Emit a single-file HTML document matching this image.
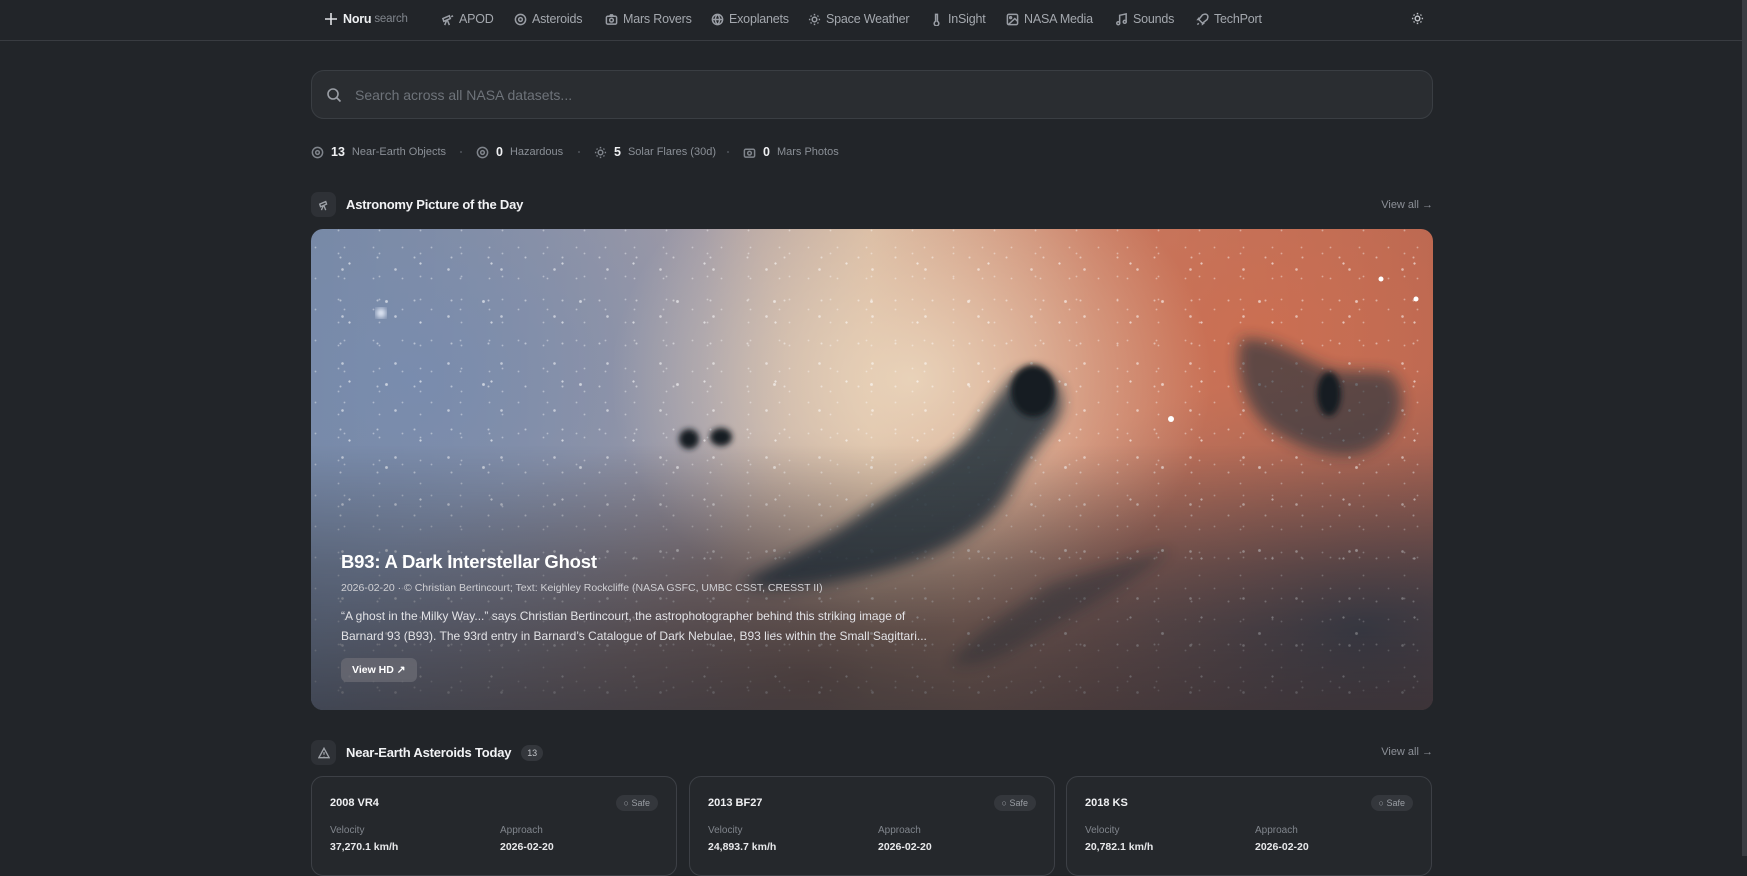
<!DOCTYPE html>
<html><head><meta charset="utf-8"><style>
*{box-sizing:border-box;margin:0;padding:0}
body{width:1747px;height:856px;overflow:hidden;background:#222529;font-family:"Liberation Sans",sans-serif;color:#e6e8eb;position:relative}
.nav{position:absolute;left:0;top:0;width:1747px;height:41px;border-bottom:1px solid #393c41}
.ni{position:absolute;top:12px;font-size:12.5px;color:#a4a8ae;display:flex;align-items:center;gap:5px;white-space:nowrap;letter-spacing:-0.2px}
.ni svg{width:13px;height:13px;stroke:#9a9ea5;fill:none;stroke-width:1.6}
.search{position:absolute;left:311px;top:70px;width:1122px;height:49px;border:1px solid #3a3e43;border-radius:13px;background:#2a2d31}
.search span{position:absolute;left:43px;top:16px;font-size:14px;color:#6e737a}
.stats{position:absolute;top:145px;left:311px;font-size:11px;color:#8a8f96}
.st{position:absolute;top:0;display:flex;align-items:center;gap:7px;white-space:nowrap}
.st b{color:#f0f1f3;font-size:12.5px}
.st svg{width:13px;height:13px;stroke:#80858c;fill:none;stroke-width:1.6}
.dot{position:absolute;top:6px;width:2px;height:2px;border-radius:50%;background:#50545a}
.hdr{position:absolute;left:311px;display:flex;align-items:center;gap:10px;font-size:13px;font-weight:bold;color:#f2f3f5;letter-spacing:-0.2px}
.ib{width:25px;height:25px;border-radius:7px;background:#2e3136;display:flex;align-items:center;justify-content:center}
.ib svg{width:12px;height:12px;stroke:#9ea2a8;fill:none;stroke-width:1.6}
.va{position:absolute;right:314px;font-size:11px;color:#8c9097}
.img{position:absolute;left:311px;top:229px;width:1122px;height:481px;border-radius:12px;overflow:hidden;
background:
radial-gradient(ellipse 300px 250px at 600px 150px,rgba(235,215,190,.9),transparent),
radial-gradient(ellipse 420px 300px at 950px 100px,rgba(205,110,80,.85),transparent),
radial-gradient(ellipse 380px 330px at 100px 150px,rgba(120,140,175,.9),transparent),
radial-gradient(ellipse 400px 260px at 1050px 400px,rgba(60,70,85,.9),transparent),
radial-gradient(ellipse 500px 250px at 500px 450px,rgba(110,80,70,.8),transparent),
linear-gradient(90deg,#7787a0 0%,#a59ca5 35%,#d4b39a 50%,#c5806a 70%,#b26552 100%)}
.stars{position:absolute;inset:0;background:
radial-gradient(circle,rgba(255,255,255,.9) 0.8px,transparent 1.4px) 3px 5px/71px 59px,
radial-gradient(circle,rgba(255,255,255,.7) 0.7px,transparent 1.3px) 11px 7px/37px 43px,
radial-gradient(circle,rgba(255,255,255,.8) 1px,transparent 1.6px) 5px 17px/53px 47px,
radial-gradient(circle,rgba(255,255,255,.6) 0.6px,transparent 1.2px) 19px 3px/29px 31px,
radial-gradient(circle,rgba(255,255,255,.6) 0.6px,transparent 1.2px) 7px 13px/41px 23px,
radial-gradient(circle,rgba(255,255,255,.9) 1.1px,transparent 1.8px) 27px 31px/97px 83px;opacity:.65}
.shade{position:absolute;inset:0;background:linear-gradient(180deg,transparent 45%,rgba(35,35,42,.35) 70%,rgba(35,35,42,.65) 100%)}
.cap{position:absolute;left:30px;top:322px;width:600px}
.cap h2{font-size:18.5px;color:#fff;font-weight:bold;margin-bottom:9px;letter-spacing:-0.2px}
.cap .m{font-size:10.5px;color:#d0d0d4;margin-bottom:12px;white-space:nowrap}
.cap p{font-size:12px;line-height:20px;color:#e2e2e6}
.btn{display:inline-block;margin-top:12px;padding:6px 11px;border-radius:6px;background:rgba(110,110,118,.7);font-size:10.5px;font-weight:bold;color:#fff}
.card{position:absolute;top:776px;width:366px;height:100px;border:1px solid #3d4046;border-radius:12px;background:#25282c}
.card .n{position:absolute;left:18px;top:20px;font-size:11px;font-weight:bold;color:#f0f1f3}
.card .safe{position:absolute;right:18px;top:18px;font-size:9px;color:#9a9ea4;background:#34373c;border-radius:9px;padding:3px 8px}
.card .l{position:absolute;top:48px;font-size:10px;color:#80858c}
.card .v{position:absolute;top:64px;font-size:10.5px;color:#e8e9eb;font-weight:bold}
.sb{position:absolute;right:0;top:0;width:5px;height:856px;background:#3a3d42}
</style></head><body>
<div class="nav">
<div class="ni" style="left:324px;color:#fff"><svg viewBox="0 0 14 14" style="stroke:#e0e2e5;width:14px;height:14px"><path d="M7 1v12M1 7h12"/></svg><b style="color:#eef0f2">Noru</b><span style="color:#80858c;margin-left:-2px;font-size:11.5px">search</span></div>
<div class="ni" style="left:441px"><svg viewBox="0 0 14 14"><path d="M2 6l7-3 1 3-7 3zM6 8l-2 5M7 8l2 5M11 4l2-1"/></svg>APOD</div>
<div class="ni" style="left:514px"><svg viewBox="0 0 14 14"><circle cx="7" cy="7" r="5.5"/><circle cx="7" cy="7" r="2"/></svg>Asteroids</div>
<div class="ni" style="left:605px"><svg viewBox="0 0 14 14"><rect x="1.5" y="3.5" width="11" height="8.5" rx="1.5"/><circle cx="7" cy="7.7" r="2"/><path d="M5 3.5l1-1.5h2l1 1.5"/></svg>Mars Rovers</div>
<div class="ni" style="left:711px"><svg viewBox="0 0 14 14"><circle cx="7" cy="7" r="5.5"/><path d="M1.5 7h11M7 1.5c-3 3-3 8 0 11M7 1.5c3 3 3 8 0 11"/></svg>Exoplanets</div>
<div class="ni" style="left:808px"><svg viewBox="0 0 14 14"><circle cx="7" cy="7" r="2.5"/><path d="M7 1v1.5M7 11.5V13M1 7h1.5M11.5 7H13M2.8 2.8l1 1M10.2 10.2l1 1M2.8 11.2l1-1M10.2 3.8l1-1"/></svg>Space Weather</div>
<div class="ni" style="left:930px"><svg viewBox="0 0 14 14"><path d="M6 1.5h2v7.5a2.5 2.5 0 1 1-2 0z"/></svg>InSight</div>
<div class="ni" style="left:1006px"><svg viewBox="0 0 14 14"><rect x="1.5" y="1.5" width="11" height="11" rx="1.5"/><circle cx="5" cy="5" r="1"/><path d="M12.5 9l-3-3-7 6.5"/></svg>NASA Media</div>
<div class="ni" style="left:1115px"><svg viewBox="0 0 14 14"><path d="M5 11V2.5l7-1.5V9.5"/><circle cx="3.5" cy="11" r="1.6"/><circle cx="10.5" cy="9.5" r="1.6"/></svg>Sounds</div>
<div class="ni" style="left:1196px"><svg viewBox="0 0 14 14"><path d="M5 9l-2-2 4-5c2-1 4-1 5 0 1 1 1 3 0 5l-5 4zM3 11l-1.5 1.5M4 7H2l1.5-2M7 10v2l2-1.5"/></svg>TechPort</div>
<div class="ni" style="left:1411px"><svg viewBox="0 0 14 14" style="stroke:#c0c3c8"><circle cx="7" cy="7" r="2.5"/><path d="M7 1v1.5M7 11.5V13M1 7h1.5M11.5 7H13M2.8 2.8l1 1M10.2 10.2l1 1M2.8 11.2l1-1M10.2 3.8l1-1"/></svg></div>
</div>
<div class="search"><svg style="position:absolute;left:14px;top:16px" width="16" height="16" viewBox="0 0 16 16" fill="none" stroke="#9a9ea5" stroke-width="1.6"><circle cx="7" cy="7" r="5"/><path d="M11 11l3.5 3.5"/></svg><span>Search across all NASA datasets...</span></div>
<div class="stats">
<div class="st" style="left:0"><svg viewBox="0 0 14 14"><circle cx="7" cy="7" r="5.5"/><circle cx="7" cy="7" r="2"/></svg><b>13</b>Near-Earth Objects</div>
<div class="dot" style="left:149px"></div>
<div class="st" style="left:165px"><svg viewBox="0 0 14 14"><circle cx="7" cy="7" r="5.5"/><circle cx="7" cy="7" r="2"/></svg><b>0</b>Hazardous</div>
<div class="dot" style="left:267px"></div>
<div class="st" style="left:283px"><svg viewBox="0 0 14 14"><circle cx="7" cy="7" r="2.5"/><path d="M7 1v1.5M7 11.5V13M1 7h1.5M11.5 7H13M2.8 2.8l1 1M10.2 10.2l1 1M2.8 11.2l1-1M10.2 3.8l1-1"/></svg><b>5</b>Solar Flares (30d)</div>
<div class="dot" style="left:416px"></div>
<div class="st" style="left:432px"><svg viewBox="0 0 14 14"><rect x="1.5" y="3.5" width="11" height="8.5" rx="1.5"/><circle cx="7" cy="7.7" r="2"/></svg><b>0</b>Mars Photos</div>
</div>
<div class="hdr" style="top:192px"><div class="ib"><svg viewBox="0 0 14 14"><path d="M2 6l7-3 1 3-7 3zM6 8l-2 5M7 8l2 5"/></svg></div>Astronomy Picture of the Day</div>
<div class="va" style="top:199px">View all →</div>
<div class="img">
<div class="stars"></div>
<svg style="position:absolute;inset:0" width="1122" height="481"><defs><filter id="b" x="-20%" y="-20%" width="140%" height="140%"><feGaussianBlur stdDeviation="7"/></filter><filter id="b2"><feGaussianBlur stdDeviation="3"/></filter></defs>
<g filter="url(#b)" fill="#22303c" opacity=".85">
<path d="M700 150c25-20 55 0 50 30-5 20-30 40-50 80-25 45-80 70-140 85-50 12-100 20-130 10 30-20 80-40 120-70 50-35 100-60 120-95z"/>
<path d="M860 320c-30 30-90 60-140 90-30 20-60 30-80 25 20-30 60-50 100-80z" opacity=".5"/>
<path d="M930 110c30-5 60 20 90 30 20 5 40 0 60 5 20 20 10 60-20 75-30 15-70 0-100-20-20-15-40-50-30-90z" opacity=".75"/>
</g>
<g filter="url(#b2)" fill="#151c24">
<ellipse cx="722" cy="162" rx="22" ry="26"/>
<ellipse cx="410" cy="208" rx="11" ry="9"/><ellipse cx="378" cy="210" rx="10" ry="10"/>
<ellipse cx="1018" cy="165" rx="12" ry="22"/>
</g>
<circle cx="70" cy="84" r="5" fill="#eef4ff" filter="url(#b2)"/>
<circle cx="860" cy="190" r="3" fill="#fff"/><circle cx="1070" cy="50" r="2.5" fill="#fff"/><circle cx="1105" cy="70" r="2.5" fill="#fff"/>
</svg>
<div class="shade"></div>
<div class="cap"><h2>B93: A Dark Interstellar Ghost</h2>
<div class="m">2026-02-20 · © Christian Bertincourt; Text: Keighley Rockcliffe (NASA GSFC, UMBC CSST, CRESST II)</div>
<p>“A ghost in the Milky Way...” says Christian Bertincourt, the astrophotographer behind this striking image of Barnard 93 (B93). The 93rd entry in Barnard’s Catalogue of Dark Nebulae, B93 lies within the Small Sagittari...</p>
<div class="btn">View HD ↗</div></div>
</div>
<div class="hdr" style="top:740px"><div class="ib"><svg viewBox="0 0 14 14"><path d="M7 1.5l6 11H1zM7 6v3M7 10.5v.5"/></svg></div>Near-Earth Asteroids Today<span style="font-size:9px;background:#34373c;border-radius:8px;padding:3px 6px;color:#c0c3c7;font-weight:normal">13</span></div>
<div class="va" style="top:746px">View all →</div>
<div class="card" style="left:311px"><div class="n">2008 VR4</div><div class="safe">○ Safe</div><div class="l" style="left:18px">Velocity</div><div class="l" style="left:188px">Approach</div><div class="v" style="left:18px">37,270.1 km/h</div><div class="v" style="left:188px">2026-02-20</div></div>
<div class="card" style="left:689px"><div class="n">2013 BF27</div><div class="safe">○ Safe</div><div class="l" style="left:18px">Velocity</div><div class="l" style="left:188px">Approach</div><div class="v" style="left:18px">24,893.7 km/h</div><div class="v" style="left:188px">2026-02-20</div></div>
<div class="card" style="left:1066px"><div class="n">2018 KS</div><div class="safe">○ Safe</div><div class="l" style="left:18px">Velocity</div><div class="l" style="left:188px">Approach</div><div class="v" style="left:18px">20,782.1 km/h</div><div class="v" style="left:188px">2026-02-20</div></div>
<div class="sb"></div>
</body></html>
